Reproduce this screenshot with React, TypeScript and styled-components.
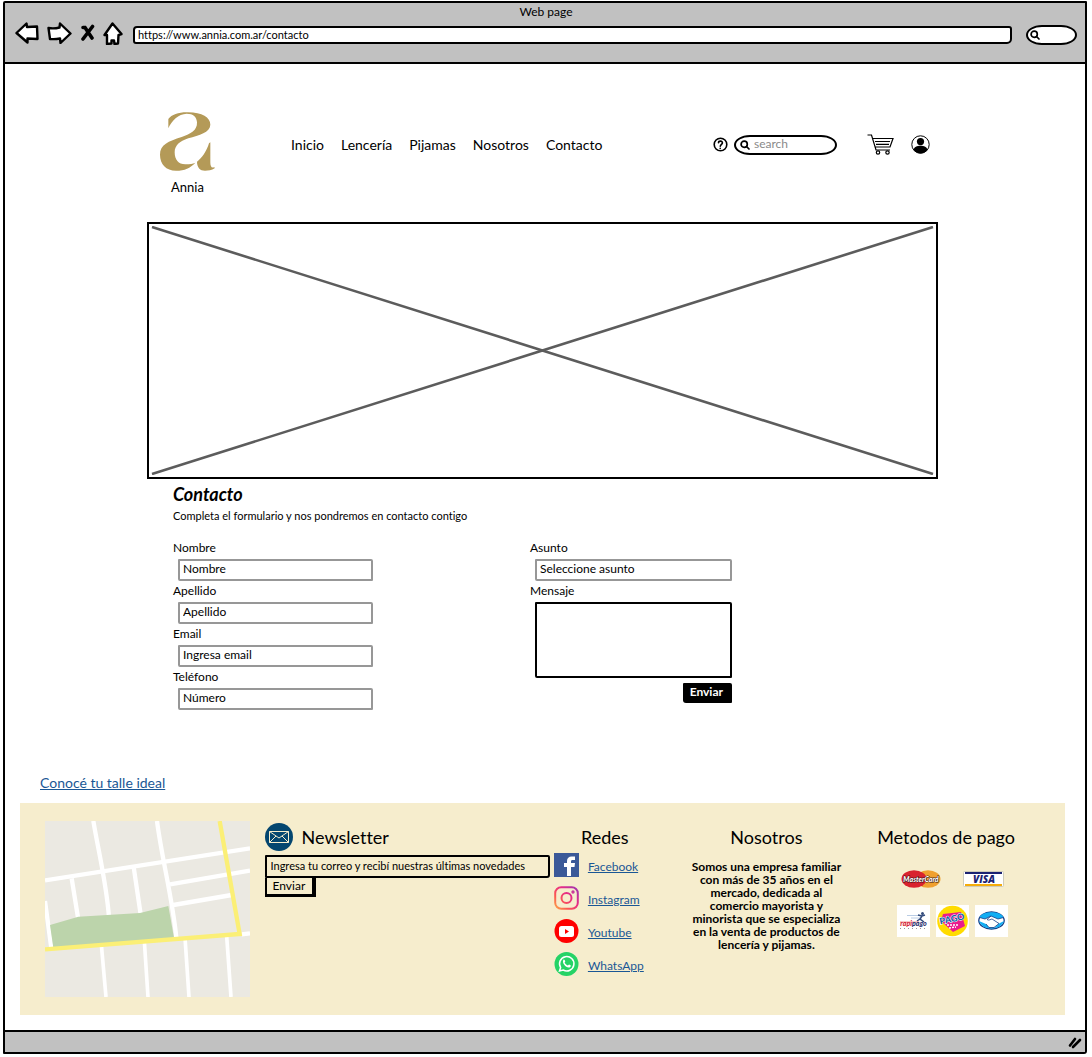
import React from 'react';
import styled, { createGlobalStyle } from 'styled-components';

const GlobalStyle = createGlobalStyle`
  *, *::before, *::after { box-sizing: border-box; }
  body { margin: 0; background: #fff; color: #000; font: 12px/16px Lato, "Open Sans", sans-serif; font-variant-ligatures: none; }
  h1, h2, p, ul, figure { margin: 0; padding: 0; }
  ul { list-style: none; }
  button, input, select, textarea { font: inherit; font-variant-ligatures: none; color: inherit; margin: 0; }
  svg { display: block; }
`;

const Window = styled.div`
  margin: 1px 5px 2px 3px;
  border: 2px solid #000;
  border-radius: 2px 1px 3px 1px;
`;

const Chrome = styled.header`
  background: #c1c1c1;
  border-bottom: 2px solid #000;
  padding: 0 8px 18px 10px;
`;

const WindowTitle = styled.div`
  text-align: center;
  padding: 1px 0 2px;
`;

const Toolbar = styled.div`
  display: flex;
  align-items: center;
  height: 22px;
`;

const ChromeButtons = styled.div`
  display: flex;
  align-items: center;
  gap: 8px;
  margin-right: 10px;
`;

const IconButton = styled.button`
  display: flex;
  padding: 0;
  border: 0;
  background: none;
  cursor: pointer;
`;

const AddressInput = styled.input`
  flex: 1;
  min-width: 0;
  height: 18px;
  margin-top: 4px;
  padding: 0 3px 1px;
  border: 2px solid #000;
  border-radius: 4px 3px 5px 3px;
  background: #fff;
  font-size: 11px;
`;

const SearchBox = styled.label<{ $width: number }>`
  display: flex;
  align-items: center;
  gap: 4px;
  width: ${(p) => p.$width}px;
  height: 20px;
  padding: 0 4px;
  border: 2px solid #000;
  border-radius: 16px / 10px;
  background: #fff;
  input {
    flex: 1;
    min-width: 0;
    border: 0;
    padding: 0 0 1px;
    background: none;
    outline: none;
  }
  input::placeholder { color: #8a8a8a; opacity: 1; }
`;

const ToolbarSearch = styled(SearchBox)`
  margin: 4px 0 0 14px;
  padding: 0 2px;
`;

const Page = styled.main`
  padding: 48px 20px 15px 15px;
`;

const Container = styled.div`
  max-width: 791px;
  margin: 0 auto;
`;

const SiteHeader = styled.div`
  display: flex;
  align-items: flex-start;
  padding: 0 8px 27px 13px;
`;

const Brand = styled.a`
  display: flex;
  flex-direction: column;
  align-items: center;
  gap: 8px;
  color: #000;
  font-size: 13px;
  text-decoration: none;
`;

const Nav = styled.nav`
  display: flex;
  gap: 17px;
  margin: 23px 0 0 76px;
  font-size: 14px;
  line-height: 20px;
  a { color: #000; text-decoration: none; }
`;

const Tools = styled.div`
  display: flex;
  align-items: center;
  gap: 6px;
  margin: 22px 0 0 auto;
`;

const Actions = styled.div`
  display: flex;
  align-items: center;
  gap: 17px;
  margin-left: 24px;
`;

const Banner = styled.figure`
  height: 257px;
  padding: 2px;
  border: 2px solid #000;
  svg { width: 100%; height: 100%; }
`;

const ContactSection = styled.section`
  padding: 5px 26px 0;
`;

const Title = styled.h1`
  font-size: 18px;
  line-height: 20px;
  font-style: italic;
`;

const Intro = styled.p`
  margin: 4px 0 16px;
  font-size: 11px;
`;

const Form = styled.form`
  display: grid;
  grid-template-columns: 200px 202px;
  justify-content: start;
  gap: 157px;
`;

const Column = styled.div`
  display: flex;
  flex-direction: column;
  gap: 2px;
`;

const Field = styled.label`
  display: flex;
  flex-direction: column;
  gap: 3px;
  input, select, textarea {
    height: 22px;
    margin-left: 5px;
    padding: 0 3px 4px;
    border: 2px solid #979797;
    border-radius: 1px 2px 1px 2px;
    background: #fff;
    appearance: none;
  }
  input::placeholder { color: #000; opacity: 1; }
  textarea {
    height: 76px;
    border-color: #000;
    resize: none;
  }
`;

const SubmitButton = styled.button`
  align-self: flex-end;
  height: 20px;
  margin-top: 3px;
  padding: 0 9px 2px 7px;
  border: 0;
  border-radius: 1px 2px 1px 3px;
  background: #000;
  color: #fff;
  font-weight: 700;
`;

const SizeLink = styled.a`
  display: inline-block;
  margin: 63px 0 10px 20px;
  color: #1a5795;
  font-size: 14px;
  line-height: 20px;
`;

const Footer = styled.footer`
  display: grid;
  grid-template-columns: 216fr 286fr 102fr 214fr 138fr;
  column-gap: 4px;
  min-height: 212px;
  padding: 18px 50px 18px 25px;
  background: #f6edcd;
`;

const MapFigure = styled.figure`
  max-width: 205px;
`;

const Heading = styled.h2`
  font-size: 18px;
  line-height: 32px;
  font-weight: 400;
  text-align: center;
  white-space: nowrap;
`;

const NewsHead = styled.div`
  display: flex;
  align-items: center;
  gap: 9px;
  padding-bottom: 2px;
`;

const NewsInput = styled.input`
  display: block;
  width: 100%;
  height: 23px;
  padding: 0 4px 2px;
  border: 2px solid #000;
  border-radius: 1px 2px 3px 1px;
  background: transparent;
  font-size: 11px;
  &::placeholder { color: #000; opacity: 1; }
`;

const NewsButton = styled.button`
  display: block;
  height: 19px;
  padding: 0 7px 0 6px;
  border: solid #000;
  border-width: 0 4px 3px 2px;
  background: transparent;
  line-height: 14px;
`;

const Social = styled.ul`
  display: flex;
  flex-direction: column;
  gap: 9px;
  li { display: flex; align-items: center; gap: 9px; height: 24px; }
  a { color: #1a5795; padding-top: 4px; }
`;

const About = styled.p`
  max-width: 154px;
  margin: 7px auto 0;
  font-weight: 700;
  line-height: 13px;
  text-align: center;
`;

const Payments = styled.div`
  display: flex;
  justify-content: center;
  align-items: center;
  gap: 22px;
  padding: 17px 0 0 13px;
`;

const Vouchers = styled(Payments)`
  gap: 6px;
`;

const StatusBar = styled.div`
  display: flex;
  justify-content: flex-end;
  align-items: center;
  height: 22px;
  padding: 2px 3px 0;
  border-top: 2px solid #000;
  background: #c1c1c1;
`;

const arrow = { fill: '#fff', stroke: '#000', strokeWidth: 2.4, strokeLinejoin: 'round' as const };

const BackIcon = () => (
  <svg width="24" height="22" viewBox="0 0 24 22"><path {...arrow} d="M1.5 11 11.5 1.5 12 5 22 4.5 22.5 17 12.5 16.5 12.5 20.5Z" /></svg>
);
const ForwardIcon = () => (
  <svg width="25" height="22" viewBox="0 0 25 22"><path {...arrow} d="M1.5 6Q7 7 12.5 5.500L13 1.500 23.500 11.500 13.500 21 13 16.500Q8 17.500 3 17Z" /></svg>
);
const CloseIcon = () => (
  <svg width="15" height="18" viewBox="0 0 15 18" fill="none" stroke="#000" strokeWidth="3.600" strokeLinecap="round"><path d="M3 3.500 5 3.500 12 14M12.500 2.500 3 15" /></svg>
);
const HomeIcon = () => (
  <svg width="20" height="23" viewBox="0 0 20 23"><path {...arrow} d="M9.500 1.500 18.500 12 15.500 13 15 21.500 11.500 22 11 18.500 8.500 18.500 8.500 21.500 4 22 4 13 1.500 13Z" /></svg>
);
const LensIcon = ({ size }: { size: number }) => (
  <svg width={size} height={size} viewBox="0 0 10 10" fill="none" stroke="#000" strokeWidth="1.7" strokeLinecap="round"><circle cx="4.200" cy="4.200" r="3.100" /><path d="M6.500 6.500 9 9" /></svg>
);

const Logo = () => (
  <svg width="55" height="59" viewBox="60 34 165 177" fill="#b49a58" aria-hidden="true">
    <path d="M85 55C95 42 115 35 140 35C185 34 211 50 211 72C210 96 178 103 145 113C118 122 104 135 104 155C104 178 116 192 138 191C150 191 158 189 166 186C150 202 135 210 108 210C78 210 60 190 60 162C60 132 85 122 125 109C152 99 172 90 171 65C170 48 160 39 140 39C115 40 95 60 85 83Z" />
    <path d="M211 125V185C211 198 215 204 223 199L224 203C215 209 205 210 195 210C180 210 171 200 171 183C184 175 201 150 207 128Z" />
  </svg>
);

const HelpIcon = () => (
  <svg width="15" height="15" viewBox="0 0 15 15" fill="none" stroke="#000" strokeWidth="1.600" strokeLinecap="round"><circle cx="7.500" cy="7.500" r="6.300" /><path d="M5.500 5.800C5.600 3.500 9.600 3.600 9.400 5.900C9.300 7.300 7.600 7.400 7.300 9.200M7.200 11.200V11.400" /></svg>
);
const CartIcon = () => (
  <svg width="27" height="21" viewBox="0 0 27 21" fill="none" stroke="#000" strokeWidth="1.200"><path d="M.5 1H4.500L9 16H23M6 4.500H26L23 13H8.500M8 7.500H23M9 10.300H22" /><circle cx="11" cy="18.500" r="1.700" /><circle cx="20.500" cy="18.500" r="1.700" /></svg>
);
const UserIcon = () => (
  <svg width="19" height="19" viewBox="0 0 19 19"><circle cx="9.500" cy="9.500" r="8.700" fill="#fff" stroke="#000" /><circle cx="9.500" cy="6.600" r="3.600" /><path d="M2.500 15C3 12 6 10.800 9.500 10.800S16 12 16.500 15C13 19.500 6 19.500 2.500 15Z" /></svg>
);

const StreetMap = () => (
  <svg width="100%" viewBox="0 0 615 528" role="img" aria-label="Mapa">
    <rect width="615" height="528" fill="#ebe9e2" />
    <g fill="none" stroke="#fff" strokeWidth="13">
      <path d="M0 178 615 82" />
      <path d="M145 0C160 90 185 190 192 290M336 0C350 110 382 230 394 350M80 172 99 290M266 138 287 280M0 240 19 382" />
      <path d="M375 190 615 149M385 252 560 222M590 340 615 337" />
      <path d="M169 370 183 528M298 360 309 528M420 350 432 528M545 345 558 528" strokeWidth="11" />
    </g>
    <path d="M15 312 100 287 285 276 370 255 387 350 25 380Z" fill="#bcd4ab" />
    <path d="M0 385 584 339 524 0" fill="none" stroke="#fbef76" strokeWidth="13" />
  </svg>
);

const MailIcon = () => (
  <svg width="28" height="28" viewBox="0 0 28 28"><circle cx="14" cy="14" r="14" fill="#04466f" /><path d="M4.500 8.500H23.500V19.500H4.500ZM4.500 8.500 14 15 23.500 8.500M4.500 19.500 11 13M23.500 19.500 17 13" fill="none" stroke="#f6edcd" /></svg>
);
const FacebookIcon = () => (
  <svg width="25" height="24" viewBox="0 0 25 24"><rect width="25" height="24" fill="#3b5998" /><path d="M13 23V14H10V10H13V8C13 5 15 3.500 17.500 3.500H21V7H18.500C17.500 7 17 7.500 17 8.500V10H21L20.500 14H17V23Z" fill="#fff" /></svg>
);
const InstagramIcon = () => (
  <svg width="25" height="24" viewBox="0 0 25 24" fill="none" stroke="url(#insta)" strokeWidth="2">
    <defs><linearGradient id="insta" x1="0" y1="24" x2="25" y2="0" gradientUnits="userSpaceOnUse"><stop stopColor="#fdb347" /><stop offset=".3" stopColor="#fb5a52" /><stop offset=".6" stopColor="#e82b86" /><stop offset="1" stopColor="#9338b8" /></linearGradient></defs>
    <rect x="1.200" y="1.200" width="22.600" height="21.600" rx="6" /><circle cx="12.500" cy="12" r="5" /><circle cx="19" cy="6" r=".7" />
  </svg>
);
const YoutubeIcon = () => (
  <svg width="25" height="24" viewBox="0 0 25 24"><circle cx="12.500" cy="12" r="12" fill="#f00" /><rect x="5" y="7" width="15" height="11" rx="2.500" fill="#fff" /><path d="M11 10V15L15 12.500Z" fill="#f00" /></svg>
);
const WhatsAppIcon = () => (
  <svg width="25" height="24" viewBox="0 0 25 24"><circle cx="12.500" cy="12" r="12" fill="#25d366" /><path d="M5.500 19 6.600 15.500A7.200 7.200 0 1 1 9.200 18Z" fill="none" stroke="#fff" strokeWidth="1.500" /><path d="M9.300 8C10 7 10.800 7.800 11.300 9.500L10.600 10.600C11.300 12 12.300 13 13.900 13.600L15 12.600C17 13.400 17.200 13.800 16.300 14.900C13.500 17.500 7.500 11.500 9.300 8Z" fill="#fff" /></svg>
);

const MasterCardIcon = () => (
  <svg width="40" height="18" viewBox="0 0 40 18" role="img" aria-label="MasterCard">
    <ellipse cx="27" cy="9" rx="12.500" ry="8.700" fill="#f0a02f" /><ellipse cx="13" cy="9" rx="12.500" ry="8.700" fill="#d9232e" />
    <path d="M18 3.500H22M17 5.500H24M17 13H24M18 15H22" stroke="#d9232e" />
    <text x="20" y="12" fill="#fff" stroke="#301014" strokeWidth="1" paintOrder="stroke" fontFamily="Lato" fontSize="7" fontWeight="900" fontStyle="italic" textAnchor="middle">MasterCard</text>
  </svg>
);
const VisaIcon = () => (
  <svg width="41" height="16" viewBox="0 0 41 16" role="img" aria-label="VISA">
    <rect x=".5" y=".5" width="40" height="15" rx="1" fill="#fff" stroke="#cfccba" /><path d="M2 2H39" stroke="#1b2272" strokeWidth="2" /><path d="M2 14H39" stroke="#f5ac0a" strokeWidth="2" />
    <text x="21" y="11.500" fill="#1b2272" fontFamily="Open Sans" fontSize="10" fontWeight="800" fontStyle="italic" textAnchor="middle">VISA</text>
  </svg>
);
const RapipagoIcon = () => (
  <svg width="33" height="32" viewBox="0 0 33 32" role="img" aria-label="rapipago">
    <rect width="33" height="32" fill="#fff" /><path d="M10 10.500H22M14 13H23" stroke="#b9cce4" /><circle cx="25.500" cy="8.500" r="1.500" fill="#334c7d" /><path d="M21 10 25 11 28 10M25 11 23 14 27 17M23 14 20 16" fill="none" stroke="#334c7d" strokeWidth="1.500" />
    <path d="M3 17H22" stroke="#e66" strokeWidth=".7" />
    <text x="16.500" y="21" fontFamily="Lato" fontSize="7" fontWeight="900" fontStyle="italic" textAnchor="middle"><tspan fill="#d51f35">rapi</tspan><tspan fill="#29306e">pago</tspan></text>
    <path d="M3 23.500H30" stroke="#999" strokeDasharray="1 3" />
  </svg>
);
const PagoFacilIcon = () => (
  <svg width="33" height="32" viewBox="0 0 33 32" role="img" aria-label="pago fácil">
    <rect width="33" height="32" fill="#fff" /><circle cx="16.500" cy="16" r="15.300" fill="#ffdb00" /><path d="M7 9 25 7 29 21 17 27 5 16Z" fill="#ea1b8d" />
    <path d="M11 20H23M13 23 20 22" stroke="#fff" strokeWidth="1.500" strokeDasharray="2 1" />
    <g transform="rotate(-12 16 14)"><text x="16" y="17" fill="#1461a8" stroke="#fff" strokeWidth="1" paintOrder="stroke" fontFamily="Lato" fontSize="9" fontWeight="900" textAnchor="middle">PAGO</text></g>
  </svg>
);
const MercadoPagoIcon = () => (
  <svg width="33" height="32" viewBox="0 0 33 32" role="img" aria-label="mercado pago">
    <rect width="33" height="32" fill="#fff" /><ellipse cx="16.500" cy="15.500" rx="12.700" ry="8.500" fill="#fff" stroke="#163d86" strokeWidth="1.300" />
    <path d="M4.500 12.500C7 5.500 26 5.500 28.500 12.500L23 14 16 11 10 14Z" fill="#12aef3" /><path d="M4 16 11 19 14 22.500H20L24 18.500 29 16C26 26 7 26 4 16Z" fill="#12aef3" />
    <path d="M4.500 12.500 10 14 16 11 23 14 28.500 12.500M16 11 12 14.500C14 16 16 14 17 14L24 18.500M11 19 14 22.500H19L24 18.500" fill="none" stroke="#163d86" strokeWidth=".8" />
  </svg>
);
const GripIcon = () => (
  <svg width="14" height="12" viewBox="0 0 14 12" stroke="#000" strokeWidth="2.600" strokeLinecap="round"><path d="M2 8.500 7 2M5 10 12 3" /></svg>
);

const navItems = ['Inicio', 'Lencería', 'Pijamas', 'Nosotros', 'Contacto'];
const textFields = [
  ['Nombre', 'Nombre', 'text'],
  ['Apellido', 'Apellido', 'text'],
  ['Email', 'Ingresa email', 'email'],
  ['Teléfono', 'Número', 'tel'],
];
const networks = [
  { name: 'Facebook', Icon: FacebookIcon },
  { name: 'Instagram', Icon: InstagramIcon },
  { name: 'Youtube', Icon: YoutubeIcon },
  { name: 'WhatsApp', Icon: WhatsAppIcon },
];

export default function App() {
  return (
    <>
      <GlobalStyle />
      <Window>
        <Chrome>
          <WindowTitle>Web page</WindowTitle>
          <Toolbar>
            <ChromeButtons>
              <IconButton aria-label="Atrás"><BackIcon /></IconButton>
              <IconButton aria-label="Adelante"><ForwardIcon /></IconButton>
              <IconButton aria-label="Detener"><CloseIcon /></IconButton>
              <IconButton aria-label="Página principal"><HomeIcon /></IconButton>
            </ChromeButtons>
            <AddressInput aria-label="Dirección" defaultValue="https://www.annia.com.ar/contacto" />
            <ToolbarSearch $width={51}><LensIcon size={10} /><input aria-label="Buscar en la web" /></ToolbarSearch>
          </Toolbar>
        </Chrome>

        <Page>
          <Container>
            <SiteHeader>
              <Brand href="#"><Logo />Annia</Brand>
              <Nav>{navItems.map((item) => <a key={item} href="#">{item}</a>)}</Nav>
              <Tools>
                <IconButton aria-label="Ayuda"><HelpIcon /></IconButton>
                <SearchBox $width={103}><LensIcon size={10} /><input aria-label="Buscar" placeholder="search" /></SearchBox>
                <Actions>
                  <IconButton aria-label="Carrito"><CartIcon /></IconButton>
                  <IconButton aria-label="Mi cuenta"><UserIcon /></IconButton>
                </Actions>
              </Tools>
            </SiteHeader>

            <Banner>
              <svg viewBox="0 0 787 249" preserveAspectRatio="none" stroke="#5c5c5c" strokeWidth="2.600">
                <path d="M1 1 786 248M786 1 1 248" />
              </svg>
            </Banner>

            <ContactSection>
              <Title>Contacto</Title>
              <Intro>Completa el formulario y nos pondremos en contacto contigo</Intro>
              <Form onSubmit={(e) => e.preventDefault()}>
                <Column>
                  {textFields.map(([label, hint, type]) => (
                    <Field key={label}>{label}<input type={type} placeholder={hint} /></Field>
                  ))}
                </Column>
                <Column>
                  <Field>Asunto<select><option>Seleccione asunto</option></select></Field>
                  <Field>Mensaje<textarea /></Field>
                  <SubmitButton type="submit">Enviar</SubmitButton>
                </Column>
              </Form>
            </ContactSection>
          </Container>

          <SizeLink href="#">Conocé tu talle ideal</SizeLink>

          <Footer>
            <MapFigure><StreetMap /></MapFigure>
            <section>
              <NewsHead><MailIcon /><Heading>Newsletter</Heading></NewsHead>
              <form onSubmit={(e) => e.preventDefault()}>
                <NewsInput type="email" aria-label="Correo" placeholder="Ingresa tu correo y recibí nuestras últimas novedades" />
                <NewsButton type="submit">Enviar</NewsButton>
              </form>
            </section>
            <section>
              <Heading>Redes</Heading>
              <Social>
                {networks.map(({ name, Icon }) => <li key={name}><Icon /><a href="#">{name}</a></li>)}
              </Social>
            </section>
            <section>
              <Heading>Nosotros</Heading>
              <About>Somos una empresa familiar con más de 35 años en el mercado, dedicada al comercio mayorista y minorista que se especializa en la venta de productos de lencería y pijamas.</About>
            </section>
            <section>
              <Heading>Metodos de pago</Heading>
              <Payments><MasterCardIcon /><VisaIcon /></Payments>
              <Vouchers><RapipagoIcon /><PagoFacilIcon /><MercadoPagoIcon /></Vouchers>
            </section>
          </Footer>
        </Page>

        <StatusBar><GripIcon /></StatusBar>
      </Window>
    </>
  );
}
